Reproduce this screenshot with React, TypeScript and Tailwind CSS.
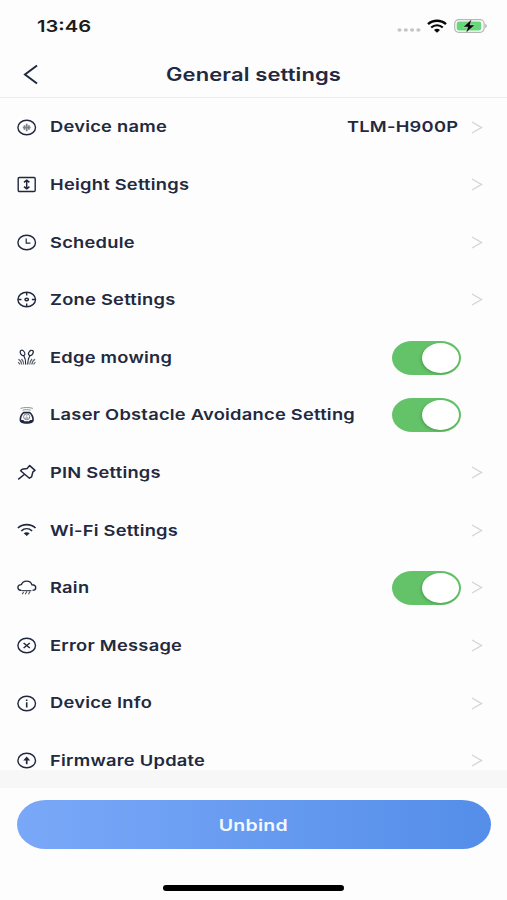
import type { ReactNode } from 'react';

type Row = {
    label: string;
    icon: ReactNode;
    value?: string;
    toggle?: boolean;
    arrow?: boolean;
};

const rows: Row[] = [
    {
        label: 'Device name',
        value: 'TLM-H900P',
        arrow: true,
        icon: (
            <>
                <ellipse cx="9.7" cy="8.5" rx="8.8" ry="7.3" />
                <path d="M9.7 4.8v7.4M7.5 6.2v4.6M11.9 6.2v4.6M5.8 8.5h7.8" stroke="#7b7f8b" strokeWidth="1.7" />
            </>
        ),
    },
    {
        label: 'Height Settings',
        arrow: true,
        icon: (
            <>
                <rect x="1.2" y="1.5" width="17" height="14" rx="1.2" />
                <path d="M9.7 4.5v8M7 6.4l2.7-2.2 2.7 2.2M7 10.6l2.7 2.2 2.7-2.2" strokeWidth="1.5" />
            </>
        ),
    },
    {
        label: 'Schedule',
        arrow: true,
        icon: (
            <>
                <ellipse cx="9.7" cy="8.5" rx="8.8" ry="7.3" />
                <path d="M9.2 4.5v4.7h4.2" strokeWidth="1.2" />
            </>
        ),
    },
    {
        label: 'Zone Settings',
        arrow: true,
        icon: (
            <>
                <ellipse cx="9.7" cy="8.5" rx="8.8" ry="7.3" />
                <path d="M9.7 1.5v3M9.7 12.5v3M1.2 8.5h3.3M14.9 8.5h3.3" />
                <ellipse cx="9.7" cy="8.5" rx="1.7" ry="1.3" strokeWidth="1.5" />
            </>
        ),
    },
    {
        label: 'Edge mowing',
        toggle: true,
        icon: (
            <g strokeWidth="1.2">
                <path d="M8.7 15.5C8.9 11.5 8.2 9 6.6 6.3M10.7 15.5c0-4 .8-6.7 2.3-9.2" />
                <ellipse cx="5.5" cy="3.9" rx="2" ry="2.9" transform="rotate(-35 5.5 3.9)" />
                <ellipse cx="13.9" cy="3.9" rx="2" ry="2.9" transform="rotate(35 13.9 3.9)" />
                <path
                    d="M4.6 15.5c0-2-1-4-3.2-5.2M6.7 15.5c0-2.5-.7-4-2.2-5.5M12.8 15.5c0-2.5.7-4 2.2-5.5M14.9 15.5c0-2 1-4 3.2-5.2M2.7 15.5c0-1-.6-1.7-1.7-2.2M16.8 15.5c0-1 .6-1.7 1.7-2.2"
                    stroke="#5a5f6e"
                />
            </g>
        ),
    },
    {
        label: 'Laser Obstacle Avoidance Setting',
        toggle: true,
        icon: (
            <>
                <path d="M3.5 1.4C7.2.2 12.2.2 15.9 1.4M5.7 3.2c2.6-.8 5.4-.8 8 0" stroke="#8d9098" strokeWidth="1" />
                <path d="M6.7 5.6C4.2 7.3 3 11 3.4 13.3c.4 2 3.3 2.6 6.3 2.6s5.9-.6 6.3-2.6c.4-2.3-.8-6-3.3-7.7Z" strokeWidth="1.7" />
                <path d="M3.6 13h2.6l1.3 1.2h4.4l1.3-1.2h2.6l-1.2 2.5-2.3.7H7.1l-2.3-.7Z" fill="#202840" stroke="none" />
                <ellipse cx="9.7" cy="9.8" rx="3.1" ry="2.9" stroke="#7b7f8b" strokeWidth="1" />
                <path d="M8.2 11h3M9.7 8.3v1.3" stroke="#7b7f8b" strokeWidth="1" />
            </>
        ),
    },
    {
        label: 'PIN Settings',
        arrow: true,
        icon: <path d="m12.7 1.6 5.3 4.8-2.1 1.5-1.3 4.9-2.2 1.4L3.6 6.7 5.2 5.2l4.9-.8ZM7.3 10.5l-6.1 4.8" strokeWidth="1.5" />,
    },
    {
        label: 'Wi-Fi Settings',
        arrow: true,
        icon: (
            <>
                <path d="M.9 6C5.7 1.5 13.7 1.5 18.5 6" strokeWidth="1.7" />
                <path d="M4.3 9c3.200-3 7.600-3 10.800 0" strokeWidth="1.7" />
                <path d="M6.700 11.300q3-2.300 6 0l-3 2.600Z" fill="#202840" stroke="none" />
            </>
        ),
    },
    {
        label: 'Rain',
        toggle: true,
        arrow: true,
        icon: (
            <>
                <path d="M4.6 11.4C2.3 11.4.9 10.2.9 8.5s1.5-2.8 3.5-2.9C5.2 3.4 7.1 2.1 9.6 2.1c2.8 0 4.7 1.4 5.3 3.7 2.3 0 3.8 1.2 3.8 2.9 0 1.5-1.2 2.6-3.2 2.7" />
                <path d="M4.8 11.6h9.6M6.6 13.1l-1.4 2M9.9 12.5l-1.7 2.7M13.1 12.5l-1.7 2.7" stroke="#4c5160" strokeWidth="1.1" />
            </>
        ),
    },
    {
        label: 'Error Message',
        arrow: true,
        icon: (
            <>
                <ellipse cx="9.7" cy="8.5" rx="8.8" ry="7.3" />
                <path d="m6.6 6 6.2 5M12.8 6l-6.2 5" strokeWidth="1.5" />
            </>
        ),
    },
    {
        label: 'Device Info',
        arrow: true,
        icon: (
            <>
                <ellipse cx="9.7" cy="8.5" rx="8.8" ry="7.3" />
                <path d="M9.7 7.2v5.4M9.7 4.4v1.5" strokeWidth="1.6" />
            </>
        ),
    },
    {
        label: 'Firmware Update',
        arrow: true,
        icon: (
            <>
                <ellipse cx="9.7" cy="8.5" rx="8.8" ry="7.3" />
                <path d="M9.7 12.2V6.5" strokeWidth="1.7" />
                <path d="m9.7 4.6 3.5 3.9H6.2Z" fill="#202840" stroke="none" />
            </>
        ),
    },
];

function Toggle() {
    return (
        <div className="flex h-[34px] w-[69px] items-center justify-end overflow-hidden bg-[#64c368] pr-[2.5px] [border-radius:20px/17px]">
            <div className="h-[30px] w-[36.5px] rounded-[50%] bg-white shadow-[-1px_1px_3px_rgba(0,60,0,0.25)]" />
        </div>
    );
}

function StatusBar() {
    return (
        <div className="flex h-[52px] shrink-0 items-center justify-between pr-[19px] pl-[37px]">
            <span className="origin-left scale-x-[1.22] text-[16.5px] font-semibold text-[#1b1b1d]">13:46</span>
            <div className="flex items-center">
                <svg width="24" height="6" viewBox="0 0 24 6" fill="#c5c5c7" className="mt-[8px] mr-[6px]">
                    <ellipse cx="2.5" cy="3" rx="2.1" ry="1.8" />
                    <ellipse cx="8.8" cy="3" rx="2.1" ry="1.8" />
                    <ellipse cx="15.1" cy="3" rx="2.1" ry="1.8" />
                    <ellipse cx="21.4" cy="3" rx="2.1" ry="1.8" />
                </svg>
                <svg width="20" height="14" viewBox="0 0 20 14" fill="none" stroke="#080808" className="mr-[7px]">
                    <path d="M1 5.2C6 .6 14 .6 19 5.2" strokeWidth="2.4" />
                    <path d="M4.2 8.5c3.3-3 8.3-3 11.6 0" strokeWidth="2.2" />
                    <path d="M7 10.9q3-2.3 6 0L10 13.7Z" fill="#080808" stroke="none" />
                </svg>
                <svg width="34" height="14" viewBox="0 0 34 14" fill="none">
                    <rect x="0.7" y="0.7" width="29.4" height="12.6" rx="4" stroke="#b4b6b4" strokeWidth="1.2" />
                    <rect x="2.7" y="2.5" width="24.5" height="9" rx="2.3" fill="#67d878" />
                    <path d="M31.3 4.6q3 2.3 0 4.6Z" fill="#aaacaa" />
                    <path d="M17.6.3 9.2 8h4.6L12 13.7 20.9 6H16Z" fill="#080808" stroke="#e9faeb" strokeWidth="0.4" />
                </svg>
            </div>
        </div>
    );
}

function SettingsRow({ label, icon, value, toggle, arrow }: Row) {
    return (
        <div className="flex h-[57.6px] shrink-0 items-center pr-[24px] pl-[17px]">
            <svg
                width="20"
                height="17"
                viewBox="0 0 20 17"
                fill="none"
                stroke="#202840"
                strokeWidth="1.4"
                strokeLinejoin="round"
                className="mr-[13px] shrink-0"
            >
                {icon}
            </svg>
            <span className="origin-left scale-x-[1.22] pt-px text-[15px] font-semibold tracking-[0.2px] whitespace-nowrap text-[#222940]">
                {label}
            </span>
            <div className="ml-auto flex items-center">
                {value && (
                    <span className="mr-[3px] origin-right scale-x-[1.22] pt-px text-[15px] font-semibold tracking-[0.2px] text-[#222940]">
                        {value}
                    </span>
                )}
                {toggle && <Toggle />}
                <svg width="12" height="13" viewBox="0 0 12 13" fill="none" stroke="#d5d5d8" strokeWidth="1.4" className="ml-[10px]">
                    {arrow && <path d="M1 1 10.5 6.5 1 12" />}
                </svg>
            </div>
        </div>
    );
}

export default function App() {
    return (
        <div className="flex h-[900px] w-[507px] flex-col overflow-hidden bg-[#fdfdfd] font-['Inter','Liberation_Sans',sans-serif]">
            <StatusBar />
            <header className="grid h-[46px] shrink-0 grid-cols-[60px_1fr_60px] items-center border-b-[1.5px] border-[#ececee]">
                <svg width="16" height="22" viewBox="0 0 16 22" fill="none" stroke="#202840" strokeWidth="2" className="ml-[23px]">
                    <path d="M14 1.5 2 10.5l12 9" />
                </svg>
                <h1 className="scale-x-[1.22] text-center text-[18px] font-semibold tracking-[0.1px] text-[#222940]">General settings</h1>
            </header>
            <main className="flex h-[672px] shrink-0 flex-col overflow-hidden pt-[0.4px]">
                {rows.map(row => (
                    <SettingsRow key={row.label} {...row} />
                ))}
            </main>
            <div className="h-[18px] shrink-0 bg-[#f7f7f7]" />
            <footer className="flex flex-col items-center pt-[12px]">
                <button className="flex h-[49px] w-[474px] items-center justify-center bg-linear-to-r from-[#7aa8f8] to-[#548ee9] [border-radius:29px/24.5px]">
                    <span className="scale-x-[1.22] text-[16px] font-semibold tracking-[0.2px] text-[#f4f8ff]">Unbind</span>
                </button>
                <div className="mt-[36px] h-[6px] w-[181px] rounded-full bg-black" />
            </footer>
        </div>
    );
}
